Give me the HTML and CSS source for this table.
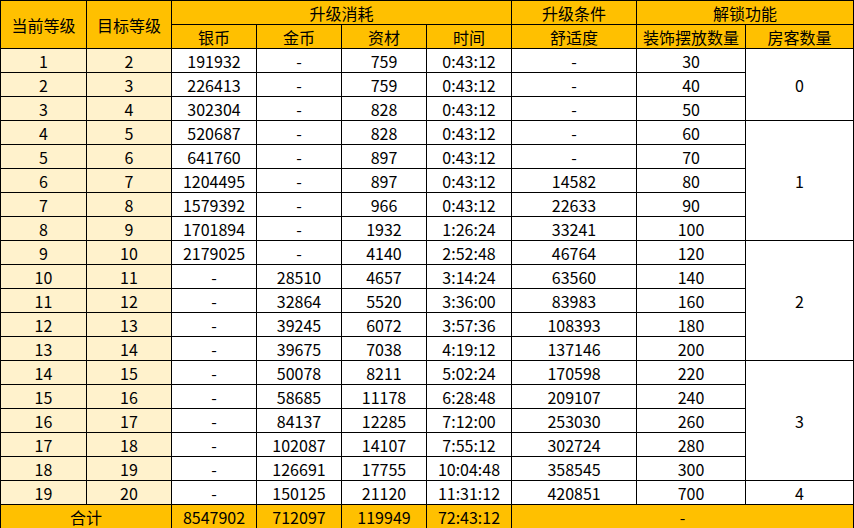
FILE: index.html
```html
<!DOCTYPE html>
<html lang="zh">
<head>
<meta charset="utf-8">
<link rel="stylesheet" href="styles.css">
</head>
<body>
<table class="grid">
<colgroup>
<col class="w86"><col class="w85"><col class="w85"><col class="w85"><col class="w85"><col class="w85"><col class="w125"><col class="w109"><col class="w108">
</colgroup>
<thead>
<tr><th rowspan="2">当前等级</th><th rowspan="2">目标等级</th><th colspan="4">升级消耗</th><th>升级条件</th><th colspan="2">解锁功能</th></tr>
<tr><th>银币</th><th>金币</th><th>资材</th><th>时间</th><th>舒适度</th><th>装饰摆放数量</th><th>房客数量</th></tr>
</thead>
<tbody>
<tr><td class="lv">1</td><td class="lv">2</td><td>191932</td><td>-</td><td>759</td><td>0:43:12</td><td>-</td><td>30</td><td rowspan="3">0</td></tr>
<tr><td class="lv">2</td><td class="lv">3</td><td>226413</td><td>-</td><td>759</td><td>0:43:12</td><td>-</td><td>40</td></tr>
<tr><td class="lv">3</td><td class="lv">4</td><td>302304</td><td>-</td><td>828</td><td>0:43:12</td><td>-</td><td>50</td></tr>
<tr><td class="lv">4</td><td class="lv">5</td><td>520687</td><td>-</td><td>828</td><td>0:43:12</td><td>-</td><td>60</td><td rowspan="5">1</td></tr>
<tr><td class="lv">5</td><td class="lv">6</td><td>641760</td><td>-</td><td>897</td><td>0:43:12</td><td>-</td><td>70</td></tr>
<tr><td class="lv">6</td><td class="lv">7</td><td>1204495</td><td>-</td><td>897</td><td>0:43:12</td><td>14582</td><td>80</td></tr>
<tr><td class="lv">7</td><td class="lv">8</td><td>1579392</td><td>-</td><td>966</td><td>0:43:12</td><td>22633</td><td>90</td></tr>
<tr><td class="lv">8</td><td class="lv">9</td><td>1701894</td><td>-</td><td>1932</td><td>1:26:24</td><td>33241</td><td>100</td></tr>
<tr><td class="lv">9</td><td class="lv">10</td><td>2179025</td><td>-</td><td>4140</td><td>2:52:48</td><td>46764</td><td>120</td><td rowspan="5">2</td></tr>
<tr><td class="lv">10</td><td class="lv">11</td><td>-</td><td>28510</td><td>4657</td><td>3:14:24</td><td>63560</td><td>140</td></tr>
<tr><td class="lv">11</td><td class="lv">12</td><td>-</td><td>32864</td><td>5520</td><td>3:36:00</td><td>83983</td><td>160</td></tr>
<tr><td class="lv">12</td><td class="lv">13</td><td>-</td><td>39245</td><td>6072</td><td>3:57:36</td><td>108393</td><td>180</td></tr>
<tr><td class="lv">13</td><td class="lv">14</td><td>-</td><td>39675</td><td>7038</td><td>4:19:12</td><td>137146</td><td>200</td></tr>
<tr><td class="lv">14</td><td class="lv">15</td><td>-</td><td>50078</td><td>8211</td><td>5:02:24</td><td>170598</td><td>220</td><td rowspan="5">3</td></tr>
<tr><td class="lv">15</td><td class="lv">16</td><td>-</td><td>58685</td><td>11178</td><td>6:28:48</td><td>209107</td><td>240</td></tr>
<tr><td class="lv">16</td><td class="lv">17</td><td>-</td><td>84137</td><td>12285</td><td>7:12:00</td><td>253030</td><td>260</td></tr>
<tr><td class="lv">17</td><td class="lv">18</td><td>-</td><td>102087</td><td>14107</td><td>7:55:12</td><td>302724</td><td>280</td></tr>
<tr><td class="lv">18</td><td class="lv">19</td><td>-</td><td>126691</td><td>17755</td><td>10:04:48</td><td>358545</td><td>300</td></tr>
<tr><td class="lv">19</td><td class="lv">20</td><td>-</td><td>150125</td><td>21120</td><td>11:31:12</td><td>420851</td><td>700</td><td>4</td></tr>
</tbody>
<tfoot>
<tr><td colspan="2">合计</td><td>8547902</td><td>712097</td><td>119949</td><td>72:43:12</td><td colspan="3">-</td></tr>
</tfoot>
</table>
</body>
</html>
```
FILE: styles.css
```css
html, body {
  margin: 0;
  padding: 0;
  background: #ffffff;
}
.grid {
  border-collapse: collapse;
  table-layout: fixed;
  width: 854px;
  font-family: "Noto Sans CJK SC", "Noto Sans", sans-serif;
  font-size: 16px;
  color: #000000;
}
.w86 { width: 86px; }
.w85 { width: 85px; }
.w125 { width: 125px; }
.w109 { width: 109px; }
.w108 { width: 108px; }
.grid th,
.grid td {
  border: 1px solid #000000;
  height: 23px;
  padding: 0;
  text-align: center;
  vertical-align: middle;
  line-height: 22px;
  white-space: nowrap;
  overflow: hidden;
}
.grid th {
  background: #ffc000;
  font-weight: normal;
}
.grid td.lv {
  background: #fff2cc;
}
.grid tfoot td {
  background: #ffc000;
}
```
